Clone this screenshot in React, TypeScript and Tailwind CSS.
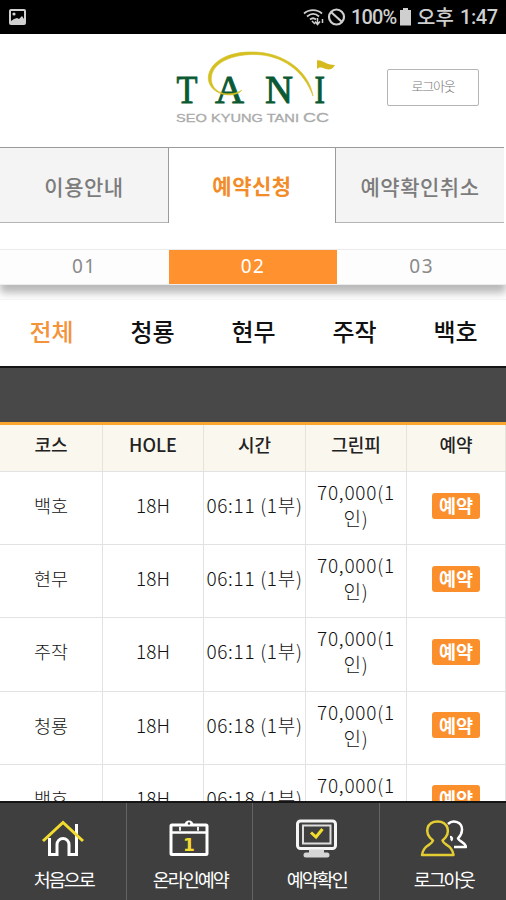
import clsx from "clsx";

const tabs = ["이용안내", "예약신청", "예약확인취소"];
const steps = ["01", "02", "03"];
const courses = ["전체", "청룡", "현무", "주작", "백호"];
const columns = ["코스", "HOLE", "시간", "그린피", "예약"];

const teeTimes = [
  { course: "백호", time: "06:11 (1부)" },
  { course: "현무", time: "06:11 (1부)" },
  { course: "주작", time: "06:11 (1부)" },
  { course: "청룡", time: "06:18 (1부)" },
  { course: "백호", time: "06:18 (1부)" },
];

function StatusBar() {
  return (
    <div className="flex h-[34px] shrink-0 items-center justify-between bg-black pr-[9px] pl-2 text-[#cfcfcf]">
      <svg width="19" height="18" viewBox="0 0 19 18">
        <rect x="1" y="1" width="17" height="16" rx="2" fill="#d0d0d0" />
        <path d="M3 3h13v8l-2-3-3 3-2-1-3 1-3 2z" fill="#000" />
        <circle cx="6" cy="6" r="1.6" fill="#d0d0d0" />
      </svg>
      <div className="flex items-center">
        <svg width="21" height="18" viewBox="0 0 21 18" fill="none" stroke="currentColor" strokeWidth="1.8">
          <path d="M1 5.5C6 1 14 1 19 5.5M4 8.5c4-3.3 8.5-3.3 12 0M7 11.5c2-1.700 4-1.700 6 0" />
          <path d="M9 13l3 3M14.500 10v6M12 13.500l2.500 3 2.500-3M19.500 11v4" strokeWidth="1.5" />
        </svg>
        <svg className="ml-[3px]" width="19" height="18" viewBox="0 0 19 18" fill="none" stroke="currentColor" strokeWidth="2.200">
          <circle cx="9.500" cy="9" r="7.500" />
          <path d="M4 4l11 10" />
        </svg>
        <span className="ml-[5px] w-[47px] font-[Roboto] text-[20px] leading-none font-medium tracking-[-0.900px] whitespace-nowrap">
          100%
        </span>
        <svg className="ml-px" width="13" height="18" viewBox="0 0 13 18" fill="currentColor">
          <path d="M4 0h5v2h3v15.500H1V2h3z" />
        </svg>
        <span className="ml-[5px] w-[38px] text-[20px] leading-none font-medium whitespace-nowrap">오후</span>
        <span className="ml-[5px] w-[37px] font-[Roboto] text-[20px] leading-none font-medium tracking-[-0.400px] whitespace-nowrap">
          1:47
        </span>
      </div>
    </div>
  );
}

function Logo() {
  return (
    <svg width="170" height="82" viewBox="170 46 170 82">
      <g fill="#0b5a34" stroke="#0b5a34" strokeWidth=".9" fontFamily="Liberation Serif, serif" fontSize="40">
        <text x="176.500" y="103" textLength="21" lengthAdjust="spacingAndGlyphs">T</text>
        <text x="215" y="103" textLength="29" lengthAdjust="spacingAndGlyphs">A</text>
        <text x="265" y="103" textLength="28" lengthAdjust="spacingAndGlyphs">N</text>
        <text x="314.500" y="103" textLength="10.500" lengthAdjust="spacingAndGlyphs">I</text>
      </g>
      <path
        d="M242 90C238 95 230 96 222 94C212 91 207 83 208.500 75C212 60 230 52 250 52C283 51 309 71 313 96C304 71 282 54 252 54.500C232 55 214 62 211.500 76C210 85 216 92 224 93.500C231 94.500 238 93 242 90Z"
        fill="#d5c022"
        stroke="#d5c022"
        strokeWidth=".6"
      />
      <path d="M317 60.500C322 59 325 65 335 65C332 70.500 328 70 323 68C320 67 318 68 317 69z" fill="#d6b91c" />
      <g fill="#aaa" stroke="#aaa" strokeWidth=".3" fontFamily="Liberation Sans, sans-serif">
        <text x="176" y="122" fontSize="11" textLength="123" lengthAdjust="spacingAndGlyphs">
          SEO KYUNG TANI
        </text>
        <text x="303" y="122" fontSize="13.500" textLength="26" lengthAdjust="spacingAndGlyphs">
          CC
        </text>
      </g>
    </svg>
  );
}

function Header() {
  return (
    <header className="flex h-[113px] shrink-0 items-start pt-3 pl-[170px]">
      <Logo />
      <button className="mt-[23px] ml-[47px] h-[37px] w-[92px] rounded-[2px] border border-[#b5b5b5] pb-1 text-[13px] leading-none font-light tracking-[-1.200px] text-[#777]">
        로그아웃
      </button>
    </header>
  );
}

function Tabs() {
  return (
    <nav className="flex h-[76px] shrink-0 pr-[2px]">
      {tabs.map((tab, i) => (
        <div
          key={tab}
          className={clsx(
            "flex items-center justify-center border-t border-[#9b9b9b] text-[21px] tracking-[0.500px]",
            i === 0 && "w-[168px]",
            i === 1
              ? "w-[168px] border-x bg-white font-bold text-[#f28c28]"
              : "border-b border-b-[#b5b5b5] bg-[#f4f4f4] pt-[3px] font-medium text-[#7c7c7c]",
            i === 2 && "flex-1"
          )}
        >
          {tab}
        </div>
      ))}
    </nav>
  );
}

function Steps() {
  return (
    <div className="mt-[26px] flex h-[36px] shrink-0 border-y border-[#ececec] bg-[#fdfdfd] shadow-[0_8px_8px_rgba(0,0,0,0.28)]">
      {steps.map((step, i) => (
        <div
          key={step}
          className={clsx(
            "flex flex-1 items-center justify-center pb-px font-['Noto_Sans'] text-[19px] tracking-[1.500px]",
            i === 1 ? "bg-[#ff922f] text-white" : "text-[#8a8a8a]"
          )}
        >
          {step}
        </div>
      ))}
    </div>
  );
}

function CourseFilter() {
  return (
    <div className="mt-[14px] grid h-[67px] shrink-0 grid-cols-5 border-t border-[#f4f4f4] bg-white pb-[4px] pl-px text-[24px] font-medium text-[#111]">
      {courses.map((course, i) => (
        <div key={course} className={clsx("flex items-center justify-center", i === 0 && "text-[#f5933a]")}>
          {course}
        </div>
      ))}
    </div>
  );
}

const cell = "flex items-center justify-center border-r border-[#e2e2e2] pb-[6px]";

function TeeTimes() {
  return (
    <div className="min-h-0 flex-1 overflow-hidden">
      <div className="h-[56px] border-t-2 border-[#151515] bg-[#484848]" />
      <div className="grid h-[50px] grid-cols-[103px_101px_102px_101px_99px] border-t-3 border-b border-t-[#f8a62f] border-b-[#e2e2e2] bg-[#faf7ee] text-[18px] font-medium text-[#222]">
        {columns.map((column) => (
          <div key={column} className="flex items-center justify-center border-r border-[#e6e3dc] pb-[8px]">
            {column}
          </div>
        ))}
      </div>
      {teeTimes.map((row, i) => (
        <div
          key={i}
          className="grid h-[73.200px] grid-cols-[103px_101px_102px_101px_99px] border-b border-[#e2e2e2] text-[19px] leading-[26px] font-light text-[#111]"
        >
          <div className={clsx(cell, "text-[18.500px]")}>{row.course}</div>
          <div className={cell}>18H</div>
          <div className={clsx(cell, "tracking-[0.700px] whitespace-nowrap")}>{row.time}</div>
          <div className={clsx(cell, "flex-col tracking-[0.800px]")}>
            <span>70,000(1</span>
            <span>인)</span>
          </div>
          <div className={cell}>
            <span className="mt-px flex h-[26px] w-[48px] items-center justify-center rounded-[3px] bg-[#fb8f2c] pb-px text-[18.500px] font-bold text-white">
              예약
            </span>
          </div>
        </div>
      ))}
    </div>
  );
}

function HomeIcon() {
  return (
    <svg width="44" height="40" viewBox="0 0 44 40" fill="none">
      <path d="M8.500 19v16.500h7.500V25.500a6 6 0 0 1 12 0v10h7.500V19M35.500 20V5" stroke="#fff" strokeWidth="3" />
      <path d="M2 22L22 3.500 42 22" stroke="#f2dc2e" strokeWidth="3" />
    </svg>
  );
}

function CalendarIcon() {
  return (
    <svg width="44" height="40" viewBox="0 0 44 40" fill="none">
      <rect x="4" y="6" width="36" height="29.500" rx="1" stroke="#fff" strokeWidth="3" />
      <path d="M4 13.500h36" stroke="#fff" strokeWidth="2.500" />
      <path d="M17.500 6a4.500 4.500 0 0 1 9 0z" fill="#fff" />
      <circle cx="22" cy="4.500" r="1.200" fill="#3f3f3f" />
      <path d="M12 9.800h2M30 9.800h2" stroke="#eee" strokeWidth="4" />
      <text x="22" y="31.500" fill="#f2dc2e" fontFamily="DejaVu Sans, sans-serif" fontSize="17" fontWeight="700" textAnchor="middle">
        1
      </text>
    </svg>
  );
}

function MonitorIcon() {
  return (
    <svg width="44" height="40" viewBox="0 0 44 40" fill="none">
      <rect x="3.500" y="2" width="38" height="27.500" rx="3" stroke="#f5f5f5" strokeWidth="3" />
      <rect x="9" y="6.500" width="27.500" height="18" stroke="#ddd" strokeWidth="2" />
      <path d="M15 30.500h15v3h3a2.500 2.500 0 0 1 0 5H12a2.500 2.500 0 0 1 0-5h3z" fill="#d5d5d5" />
      <path d="M17 13.500l5 4.500 6.500-8" stroke="#f2dc2e" strokeWidth="3" />
    </svg>
  );
}

function PeopleIcon() {
  return (
    <svg width="48" height="40" viewBox="0 0 48 40" fill="none" strokeLinejoin="round">
      <path
        d="M29 5C34 0 43.500 3 43 11c-.2 4-1.500 6-4 8.500 1.500 3.500 7 3 8 8.500H35M31 18c2 0 2.500 2 1 3.500"
        stroke="#fff"
        strokeWidth="2.500"
      />
      <path
        d="M14 21.500C4 14 8 2.500 18.500 2.500S33 14 23.500 21.500C25 27 33 25 34.500 36H3C4.500 25 12.500 27 14 21.500z"
        stroke="#e3cd32"
        strokeWidth="2.500"
      />
    </svg>
  );
}

const menu = [
  { label: "처음으로", icon: <HomeIcon /> },
  { label: "온라인예약", icon: <CalendarIcon /> },
  { label: "예약확인", icon: <MonitorIcon /> },
  { label: "로그아웃", icon: <PeopleIcon /> },
];

function BottomMenu() {
  return (
    <nav className="grid h-[99px] shrink-0 grid-cols-4 border-t-2 border-[#151515] bg-[#3f3f3f] text-white">
      {menu.map(({ label, icon }) => (
        <div key={label} className="flex flex-col items-center border-r border-[#636363] pt-4 last:border-r-0">
          {icon}
          <span className="mt-[9px] pl-[2px] text-[18.500px] leading-[22px] tracking-[-2px] whitespace-nowrap">{label}</span>
        </div>
      ))}
    </nav>
  );
}

export default function App() {
  return (
    <div className="flex h-[900px] w-[506px] flex-col overflow-hidden bg-white font-['Noto_Sans_CJK_KR',sans-serif]">
      <StatusBar />
      <Header />
      <Tabs />
      <Steps />
      <CourseFilter />
      <TeeTimes />
      <BottomMenu />
    </div>
  );
}
